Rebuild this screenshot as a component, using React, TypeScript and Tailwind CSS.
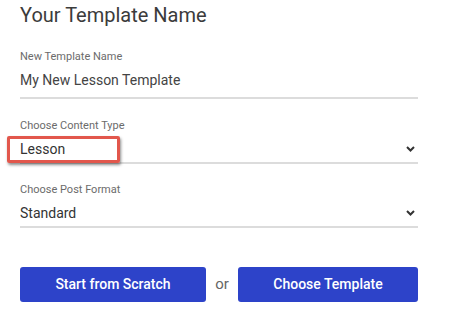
export default function App() {
  return (
    <div className="w-[452px] h-[310px] bg-white overflow-hidden font-['Roboto',sans-serif]">
      <div className="pl-5 w-[418px]">
        <h1 className="pt-[3px] text-[20px] leading-[24px] text-[#3b3b3b] font-normal">
          Your Template Name
        </h1>

        {/* Template name input */}
        <div className="mt-[23px]">
          <label className="block text-[11px] leading-[13px] text-[#6b6b6b]">
            New Template Name
          </label>
          <div className="mt-2 pb-2 border-b-2 border-[#dcdcdc]">
            <span className="block text-[14px] leading-[18px] text-[#444]">
              My New Lesson Template
            </span>
          </div>
        </div>

        {/* Content type */}
        <div className="mt-[20px]">
          <label className="block text-[11px] leading-[13px] text-[#6b6b6b]">
            Choose Content Type
          </label>
          <div className="mt-2 pb-1 border-b-2 border-[#dcdcdc] flex items-center justify-between">
            <div className="relative">
              <span className="block text-[14px] leading-[18px] text-[#333]">Lesson</span>
              <div className="absolute left-[-13px] top-[-4px] w-[113px] h-[27px] border-[3px] border-[#e2574c] rounded-[2px] shadow-[1px_2px_3px_rgba(0,0,0,0.45)]" />
            </div>
            <Chevron />
          </div>
        </div>

        {/* Post format */}
        <div className="mt-[19px]">
          <label className="block text-[11px] leading-[13px] text-[#6b6b6b]">
            Choose Post Format
          </label>
          <div className="mt-2 pb-1 border-b-2 border-[#dcdcdc] flex items-center justify-between">
            <span className="block text-[14px] leading-[18px] text-[#333]">Standard</span>
            <Chevron />
          </div>
        </div>

        <div className="mt-[39px] flex items-center">
          <button className="w-[186px] h-[35px] rounded-[3px] bg-[#2d43c9] text-white text-[14px] font-medium">
            Start from Scratch
          </button>
          <span className="w-[32px] text-center text-[15px] text-[#666]">or</span>
          <button className="w-[180px] h-[35px] rounded-[3px] bg-[#2d43c9] text-white text-[14px] font-medium">
            Choose Template
          </button>
        </div>
      </div>
    </div>
  );
}

function Chevron() {
  return (
    <svg width="9" height="6" viewBox="0 0 9 6" className="mr-[3px]">
      <path d="M1 1l3.5 3.5L8 1" fill="none" stroke="#333" strokeWidth="2" />
    </svg>
  );
}
